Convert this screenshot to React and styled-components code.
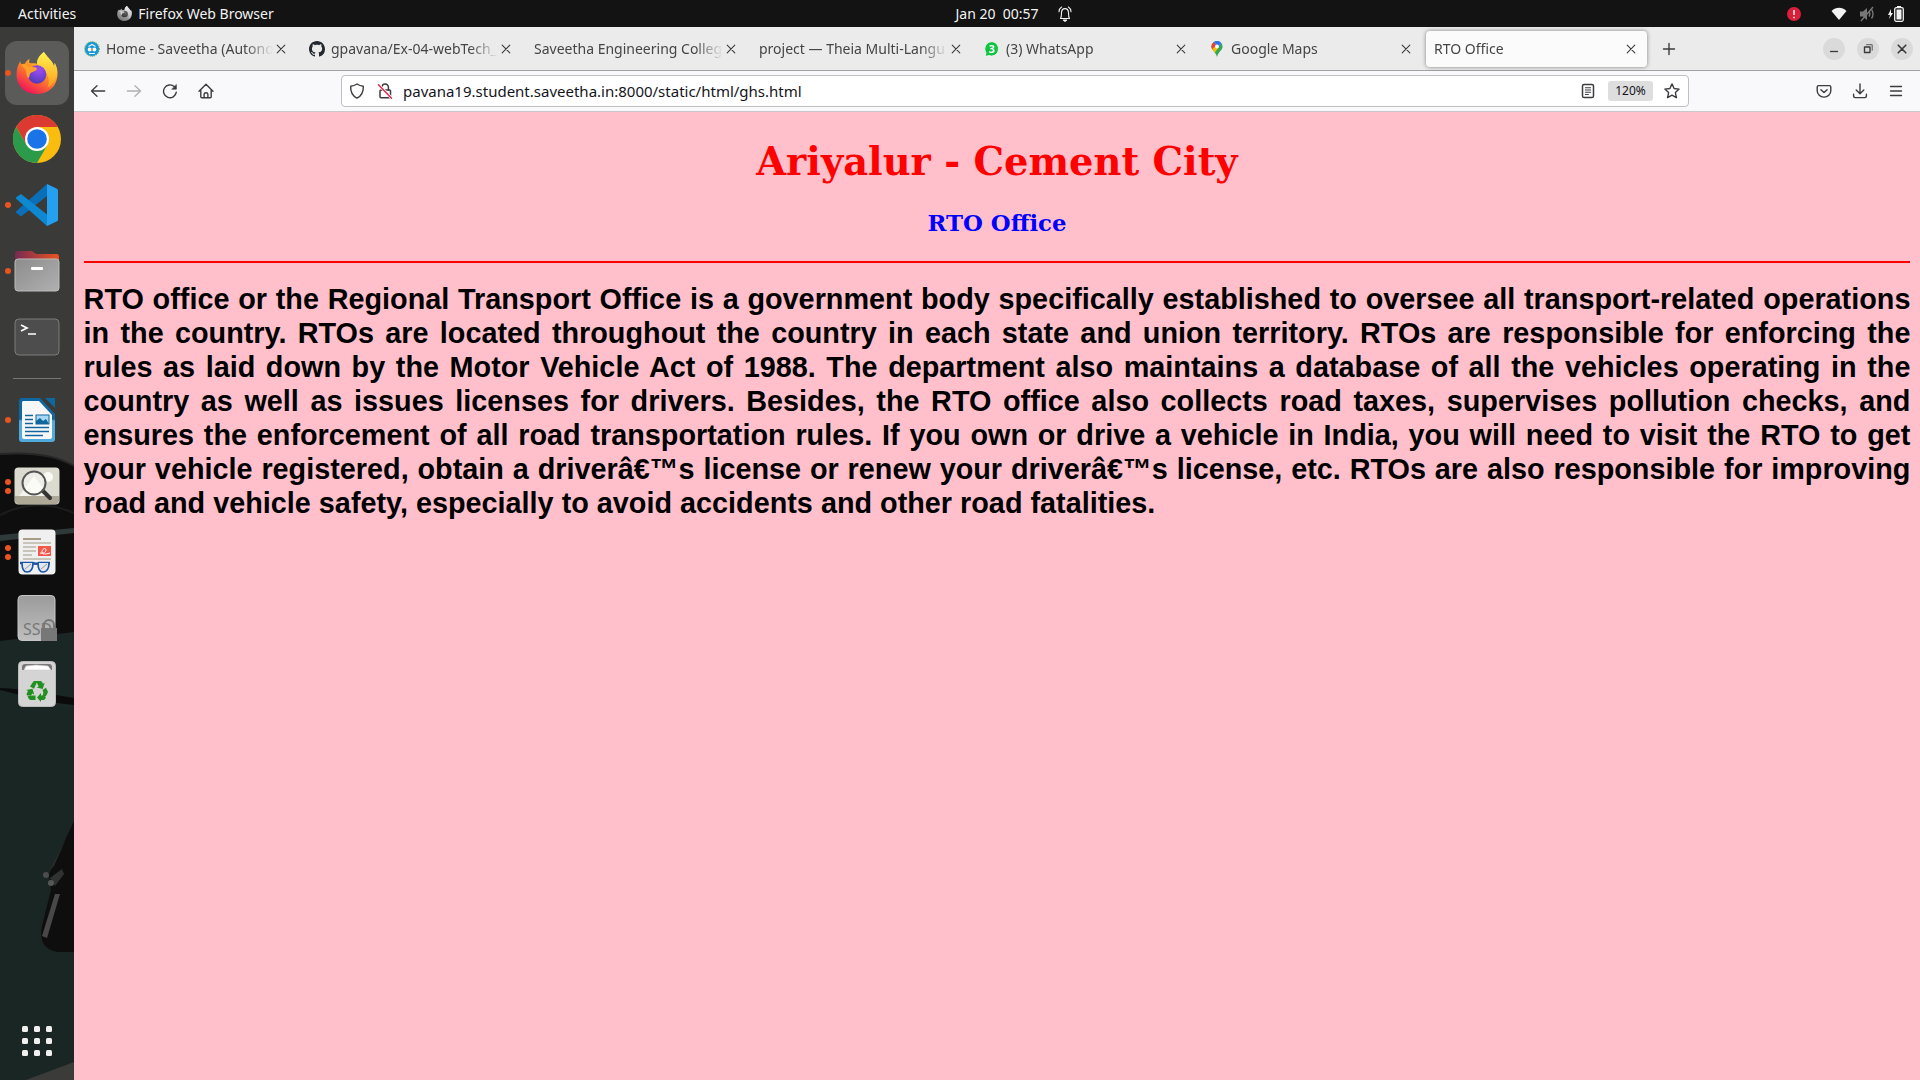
import React from "react";
import styled, { createGlobalStyle, css } from "styled-components";

const GlobalStyle = createGlobalStyle`
  *, *::before, *::after { box-sizing: border-box; }
  body { margin: 0; font-family: "Noto Sans", "Open Sans", sans-serif; font-size: 14px; }
  button { font: inherit; color: inherit; background: none; border: 0; padding: 0; margin: 0; cursor: pointer; }
  svg { display: block; flex: none; }
`;

const Desktop = styled.div`
  display: flex;
  flex-direction: column;
  min-height: 100vh;
  background: #131313;
`;

const TopBar = styled.header`
  display: grid;
  grid-template-columns: 74px 1fr auto 1fr;
  align-items: center;
  height: 27px;
  color: #f2f2f2;
  line-height: 20px;
`;

const BarLeft = styled.div`
  grid-column: 1 / 3;
  display: flex;
  align-items: center;
  gap: 41px;
  padding-left: 18px;
`;

const AppMenu = styled.button`
  display: flex;
  align-items: center;
  gap: 6px;
`;

const BarCenter = styled.button`
  display: grid;
  grid-template-columns: 34px auto 34px;
  align-items: center;
  white-space: pre;
  svg { justify-self: end; }
`;

const BarRight = styled.div`
  display: flex;
  align-items: center;
  justify-content: flex-end;
  gap: 12px;
  padding-right: 16px;
`;

const Alert = styled.span`
  display: flex;
  margin-right: 18px;
`;

const Main = styled.div`
  display: flex;
  flex: 1;
`;

const Dock = styled.nav`
  position: relative;
  display: flex;
  flex-direction: column;
  align-items: center;
  gap: 2px;
  width: 74px;
  flex: none;
  padding: 14px 0 7px;
  background: #1a2624;
  overflow: hidden;
`;

const Wallpaper = styled.svg`
  position: absolute;
  top: 0;
  left: 0;
`;

const DockItem = styled.button`
  position: relative;
  display: flex;
  align-items: center;
  justify-content: center;
  width: 64px;
  height: 64px;
  border-radius: 12px;
  ${(p) => p.$active && css`background: #5b5b59;`}
  ${(p) => p.$last && css`margin-top: auto;`}
`;

const Running = styled.span`
  position: absolute;
  left: 0;
  top: 0;
  height: 100%;
  display: flex;
  flex-direction: column;
  justify-content: center;
  gap: 3px;
  i {
    width: 6px;
    height: 6px;
    border-radius: 50%;
    background: #e95420;
  }
`;

const Divider = styled.hr`
  position: relative;
  width: 48px;
  height: 1px;
  margin: 7px 0;
  border: 0;
  background: #767675;
`;

const Browser = styled.div`
  flex: 1;
  min-width: 0;
  display: flex;
  flex-direction: column;
  background: #f9f9fb;
`;

const TabStrip = styled.div`
  display: flex;
  align-items: center;
  height: 44px;
  background: #ebebeb;
  border-bottom: 1px solid #a2a2a4;
  color: #454545;
`;

const Tab = styled.div`
  display: flex;
  align-items: center;
  flex: 0 1 221px;
  min-width: 0;
  height: 36px;
  margin: 0 2px;
  padding: 0 8px;
  border-radius: 4px;
  ${(p) => p.$active && css`
    background: #fbfbfb;
    box-shadow: 0 0 4px rgba(0, 0, 0, 0.45);
  `}
`;

const TabLabel = styled.button`
  display: flex;
  align-items: center;
  gap: 6px;
  flex: 1;
  min-width: 0;
  height: 100%;
  overflow: hidden;
  white-space: nowrap;
  mask-image: linear-gradient(to left, transparent 0, #000 28px);
`;

const IconButton = styled.button`
  display: flex;
  align-items: center;
  justify-content: center;
  flex: none;
  width: ${(p) => p.$w || 36}px;
  height: ${(p) => p.$h || 32}px;
  color: ${(p) => (p.$faded ? "#b0b0b3" : "#3c3c40")};
`;

const WindowButtons = styled.div`
  display: flex;
  gap: 12px;
  margin-left: auto;
  padding-right: 7px;
`;

const WindowButton = styled.button`
  display: flex;
  align-items: center;
  justify-content: center;
  width: 22px;
  height: 22px;
  border-radius: 50%;
  background: #dadada;
  color: #3a3a3a;
`;

const Toolbar = styled.div`
  display: flex;
  align-items: center;
  height: 41px;
  padding: 0 6px;
  border-bottom: 1px solid #c8c8ca;
`;

const NavGroup = styled.div`
  display: flex;
`;

const AddressBar = styled.form`
  display: flex;
  align-items: center;
  flex: 1;
  min-width: 0;
  height: 32px;
  margin: 0 117px;
  padding: 0 1px;
  background: #fff;
  border: 1px solid #c0c0c3;
  border-radius: 4px;
`;

const AddressInput = styled.input`
  flex: 1;
  min-width: 0;
  padding: 0 0 0 4px;
  border: 0;
  outline: 0;
  background: transparent;
  color: #15141a;
  font-family: inherit;
  font-size: 15px;
`;

const Zoom = styled.button`
  width: 45px;
  height: 20px;
  margin: 0 4px;
  border-radius: 3px;
  background: #dedede;
  color: #15141a;
  font-size: 12px;
  line-height: 20px;
`;

/* The page is viewed at the zoom level shown in the address bar. */
const Page = styled.main`
  zoom: 120%;
  flex: 1;
  padding: 23px 8px;
  background: #ffc0cb;
`;

const PageTitle = styled.h1`
  margin: 0 0 22px;
  color: #f00;
  font: bold 32px/37px "DejaVu Serif", serif;
  text-align: center;
`;

const PageSubtitle = styled.h3`
  margin: 0 0 20px;
  color: #00f;
  font: bold 19px/22px "DejaVu Serif", serif;
  text-align: center;
`;

const Rule = styled.hr`
  margin: 0 0 17px;
  border: 0;
  border-top: 2px solid #f00;
`;

const Body = styled.p`
  margin: 0;
  color: #000;
  font: bold 24px/1.18 "Liberation Sans", Arial, sans-serif;
  text-align: justify;
`;

/* ---------- line icons ---------- */

const Line = ({ size = 16, w = 1.3, children }) => (
  <svg width={size} height={size} viewBox="0 0 16 16" fill="none" stroke="currentColor" strokeWidth={w} strokeLinecap="round" strokeLinejoin="round">
    {children}
  </svg>
);

const Cross = ({ w = 1.1 }) => <Line w={w}><path d="M4.2 4.2l7.6 7.6M11.8 4.2l-7.6 7.6" /></Line>;
const Back = () => <Line><path d="M14.7 8H1.5M7 2.7L1.5 8 7 13.3" /></Line>;
const Forward = () => <Line><path d="M1.3 8h13.2M9 2.7L14.5 8 9 13.3" /></Line>;
const Reload = () => (
  <Line w={1.4}><path d="M14.3 9.2A6.4 6.4 0 1 1 12.3 3.6" /><path d="M14.4 1.8v4.4H10z" fill="currentColor" strokeWidth=".6" /></Line>
);
const Home = () => (
  <Line w={1.4}><path d="M1 8.3L8 1.2l7 7.1M2.8 7v6.8c0 .6.4 1 1 1h8.4c.6 0 1-.4 1-1V7" /><path d="M6.1 14.6v-3.4c0-.9.8-1.5 1.9-1.5s1.9.6 1.9 1.5v3.4" /></Line>
);
const Shield = () => <Line w={1.4}><path d="M8 1C6 2.3 3.8 3 1.7 3.2c-.3 5.1 1.4 9.4 6.3 11.9 4.9-2.5 6.6-6.8 6.3-11.9C12.200 3 10 2.300 8 1z" /></Line>;
const LockOff = () => (
  <Line w={1.5}><rect x="3" y="7" width="10.500" height="7.700" rx="1" /><path d="M5 7V4.300a3.200 3.200 0 0 1 6.400 0V7" /><path d="M1.500 1.500l13.500 14" stroke="#fff" strokeWidth="3" /><path d="M1.500 1.700l13 13.600" stroke="#e22850" strokeWidth="1.500" /></Line>
);
const Reader = () => <Line w={1.5}><rect x="2.500" y="1.500" width="11" height="13" rx="1.600" /><path d="M5.400 4.700h5.200M5.400 7h5.200M5.400 9.300h5.200M5.400 11.500h3" strokeWidth="1.100" /></Line>;
const Star = () => <Line w={1.4}><path d="M8 .9l2.100 4.600 5 .6-3.700 3.500 1 5L8 12.100l-4.400 2.500 1-5L.9 6.100l5-.6z" /></Line>;
const Pocket = () => <Line w={1.4}><path d="M2.600 2.600h10.800c.8 0 1.400.6 1.400 1.300v3.800a6.800 6.400 0 0 1-13.600 0V3.900c0-.7.6-1.300 1.400-1.300z" /><path d="M4.900 6.700L8 9.600l3.100-2.900" /></Line>;
const Download = () => <Line w={1.4}><path d="M8 1v9.500M4.200 7L8 10.700 11.800 7M1.600 11.300v1.800c0 .9.600 1.500 1.500 1.500h9.800c.9 0 1.500-.6 1.500-1.500v-1.800" /></Line>;
const Menu = () => <Line w={1.3}><path d="M2.500 3.500h11M2.500 8h11M2.500 12.500h11" /></Line>;
const Plus = () => <Line w={1.4}><path d="M8 2.500v11M2.500 8h11" /></Line>;

const Bell = () => (
  <Line w={1.1}><path d="M3.500 12.500c1-1.200 1-3 1-5.500 0-2.600 1.300-4.400 3.500-4.400s3.500 1.800 3.500 4.400c0 2.500 0 4.300 1 5.500zM2 5.800C2 3.500 3 2 4.600 1M14 5.800C14 3.500 13 2 11.400 1" /><path d="M6.400 14h3.200L8 15.400z" fill="currentColor" /></Line>
);

/* ---------- colour icons ---------- */

const FirefoxLogo = ({ size = 42, gray }) => {
  const id = gray ? "fg" : "fc";
  const stops = gray ? ["#ddd", "#aaa", "#777"] : ["#fff04a", "#ff9120", "#f0125a"];
  return (
    <svg width={size} height={size} viewBox="0 0 42 43">
      <defs>
        <linearGradient id={id} x1=".85" y1=".1" x2=".3" y2="1">
          <stop offset=".05" stopColor={stops[0]} /><stop offset=".45" stopColor={stops[1]} /><stop offset="1" stopColor={stops[2]} />
        </linearGradient>
        <radialGradient id={id + "p"} cx=".6" cy=".25" r=".8">
          <stop offset="0" stopColor={gray ? "#666" : "#a24bf5"} /><stop offset="1" stopColor={gray ? "#333" : "#4a3bb5"} />
        </radialGradient>
        <linearGradient id={id + "f"} x1="0" y1="0" x2="0" y2="1">
          <stop offset="0" stopColor={gray ? "#eee" : "#fff44f"} /><stop offset="1" stopColor={gray ? "#bbb" : "#ff9d20"} />
        </linearGradient>
      </defs>
      <path d="M4 9c-4 7-5 14-3 21 3 8 10 13 20 13s18-6 20-14c2-7 1-13-2-18 0 2 0 3-.5 4C37 9 31 5 28 0c-4 3-7 7-7 12-4-1-5 0-8-1 0-1 0-3 .5-4-2 1-4 3-5 5-1 0-2 0-3 .5C4 12 4 10 4 9z" fill={`url(#${id})`} />
      <path d="M21 12c0-5 3-9 7-12 3 5 9 9 10.500 15 .5-1 .5-2 .5-4 3 6 3 12 0 18-1 3-4 6-7 7 3-7 0-14-5-19z" fill={`url(#${id}f)`} />
      <circle cx="21" cy="23" r="9.500" fill={`url(#${id}p)`} />
      <path d="M5 13c4-1 6 0 8 2 3 0 7 0 8 2 0 3-5 3-7 5-1 2 0 3-2 5-3-4-1-7-3-9z" fill={gray ? "#ccc" : "#ffa12c"} />
    </svg>
  );
};

const Chrome = () => (
  <svg width="48" height="48" viewBox="0 0 48 48">
    <circle cx="24" cy="24" r="24" fill="#fbbc10" />
    <path d="M3.200 12A24 24 0 0 1 44.800 12H24L13.600 30z" fill="#dc3a30" />
    <path d="M3.200 12A24 24 0 0 0 24 48l10.400-18H13.600z" fill="#2b9a4a" />
    <circle cx="24" cy="24" r="12" fill="#fff" /><circle cx="24" cy="24" r="9.800" fill="#1b73e8" />
  </svg>
);

const VSCode = () => (
  <svg width="42" height="42" viewBox="0 0 42 42">
    <path d="M31 0v12L5 32.500l-4.500-3.500c-.7-.6-.7-1.400 0-2z" fill="#0a6fb8" />
    <path d="M31 42V30.500L5 10 .5 13c-.7.600-.7 1.400 0 2z" fill="#0f88d2" />
    <path d="M31 0l9.500 4.500c1 .5 1.500 1.200 1.500 2v29c0 .9-.5 1.600-1.500 2L31 42z" fill="#25a0f0" />
  </svg>
);

const Files = () => (
  <svg width="46" height="42" viewBox="0 0 46 42">
    <defs>
      <linearGradient id="fol"><stop offset="0" stopColor="#772953" /><stop offset="1" stopColor="#e95420" /></linearGradient>
      <linearGradient id="fr" x1="0" y1="0" x2="1" y2="1"><stop offset="0" stopColor="#8c8c8c" /><stop offset="1" stopColor="#b0b0b0" /></linearGradient>
    </defs>
    <path d="M1 4c0-2 1-3 3-3h14l4 3h20c2 0 3 1 3 3v12H1z" fill="url(#fol)" />
    <rect x="1" y="9" width="44" height="32" rx="3" fill="url(#fr)" stroke="#bcbcbc" />
    <rect x="17" y="17" width="12" height="3" rx="1" fill="#fff" />
  </svg>
);

const Terminal = () => (
  <svg width="46" height="38" viewBox="0 0 46 38">
    <rect x="1" y="1" width="44" height="36" rx="4" fill="#4d4d4d" stroke="#7c7c7a" />
    <path d="M7 7l6 3-6 3M14 16h8" fill="none" stroke="#fff" strokeWidth="1.700" />
  </svg>
);

const Writer = () => (
  <svg width="38" height="46" viewBox="0 0 38 46">
    <defs><linearGradient id="wr" x1="0" y1="0" x2="0" y2="1"><stop offset=".48" stopColor="#10679f" /><stop offset=".52" stopColor="#52a9dc" /></linearGradient></defs>
    <path d="M5 1h17l15 16v25c0 2-1 3-3 3H4c-2 0-3-1-3-3V5c0-3 1-4 4-4z" fill="url(#wr)" />
    <path d="M5 4h16l13 14v22c0 1-1 2-2 2H6c-1 0-2-1-2-2V5z" fill="#f7f7f7" />
    <path d="M27 1h10v10z" fill="#10679f" />
    <path d="M7 18.500h8M7 22.500h8M7 26.500h8M7 30.500h24M7 34.500h24M7 38.500h18" stroke="#10679f" strokeWidth="1.700" />
    <rect x="18" y="18" width="13" height="9" fill="#a7d8f5" stroke="#10679f" /><path d="M18 27v-3l4-3 3 3 3-2 3 5z" fill="#10679f" />
  </svg>
);

const ImageViewer = () => (
  <svg width="46" height="38" viewBox="0 0 46 38">
    <rect x=".5" y=".5" width="45" height="37" rx="4" fill="#dcdbd0" />
    <path d="M1 29h44v4c0 3-1 4-4 4H5c-3 0-4-1-4-4z" fill="#aea897" />
    <path d="M5 29L20 9l15 20z" fill="#f4f4ee" /><circle cx="34" cy="10" r="5" fill="#fafaf5" />
    <path d="M29 24l7 7" stroke="#333" strokeWidth="4" strokeLinecap="round" />
    <circle cx="20" cy="16" r="11.500" fill="#fff" fillOpacity=".5" stroke="#555" strokeWidth="2" />
  </svg>
);

const DocViewer = () => (
  <svg width="38" height="46" viewBox="0 0 38 46">
    <rect x=".5" y=".5" width="37" height="45" rx="4" fill="#f0f0f0" />
    <path d="M5 10h18" stroke="#a89d86" strokeWidth="2" />
    <path d="M5 14h28M5 18h13M5 22h13M5 26h9M5 30h28" stroke="#bcb5a6" strokeWidth="1.700" />
    <rect x="20" y="17" width="13" height="10" fill="#f25747" /><path d="M22 24c3 1 6-1 6-3s-3-2-4 1 2 4 8 2" fill="none" stroke="#fff" />
    <path d="M2 34h13c1 1 5 1 6 0h11" fill="none" stroke="#1a55a5" strokeWidth="2.500" />
    <path d="M4 34c0 5 1 9 5 9 5 0 6-4 6-9M20 34c0 5 1 9 5 9 4 0 6-4 6-9" fill="#e3e8ee" stroke="#1a55a5" strokeWidth="1.700" />
    <path d="M7 40l6-5M23 40l6-5" stroke="#999" />
  </svg>
);

const Ssd = () => (
  <svg width="40" height="46" viewBox="0 0 40 46">
    <defs><linearGradient id="sd" x1="0" y1="0" x2="0" y2="1"><stop offset="0" stopColor="#9b9b9b" /><stop offset="1" stopColor="#bfbfbf" /></linearGradient></defs>
    <rect x="1" y=".5" width="37" height="45" rx="4" fill="url(#sd)" stroke="#c5c5c5" />
    <text x="6" y="40" fontFamily="Noto Sans, sans-serif" fontSize="16" fill="#777">SSD</text>
    <path d="M27 34v-4a5 5 0 0 1 10 0v4" fill="none" stroke="#777" strokeWidth="2" /><path d="M24 33h16v13H24z" fill="#777" />
  </svg>
);

const Trash = () => (
  <svg width="38" height="46" viewBox="0 0 38 46">
    <rect x=".5" y=".5" width="37" height="45" rx="4" fill="#d4d4d4" stroke="#bbb" />
    <path d="M4 9V6c0-2 1-3 3-3h24c2 0 3 1 3 3v3z" fill="#777" />
    <path d="M6 9l2-4 10-1 12 1 3 4z" fill="#fff" stroke="#ccc" strokeWidth=".6" />
    <g fill="#20901f">
      <path d="M12 25.500l3-4.500c.5-.7 1-1 2-1h2.500L16 27.800z" />
      <path d="M18 20h4c1 0 1.500.3 2 1l1 1.700 1.700-1-2 6.300-6-1.500 2-1z" />
      <path d="M24.500 29l3.500-2.200 1.500 3c.5 1 .5 1.500 0 2.500L28 35l-3.700-.1c1.200-2 1.500-3.900.2-5.900z" />
      <path d="M28 36l-1 2c-.5.700-1 1-2 1h-2v2l-4-4.500 4-4.500v2.500h3z" />
      <path d="M17.500 34.500V39H13c-1 0-1.500-.3-2-1l-1.500-2.500c1.500-1 3-1 4.500-1z" />
      <path d="M9 34.500c-.5-1-.4-1.700 0-2.500l1-2-1.700-1 6.200-1.300 1.700 5.800-2-1-1.200 2z" />
    </g>
  </svg>
);

const AppGrid = () => (
  <svg width="30" height="30" viewBox="0 0 30 30" fill="#f0f0ee">
    {[0, 12, 24].map((y) => [0, 12, 24].map((x) => <rect key={`${x}-${y}`} x={x} y={y} width="6" height="6" rx="1.500" />))}
  </svg>
);

const DockWallpaper = () => (
  <Wallpaper width="74" height="1053" viewBox="0 0 74 1053" aria-hidden="true">
    <path d="M0 0h74v440H0z" fill="#3a3a38" />
    <path d="M0 427c30-2 56 1 74 12v180L0 630z" fill="#0e0e0f" />
    <path d="M0 427c30-2 56 1 74 12" fill="none" stroke="#262626" strokeWidth="2" />
    <path d="M0 488c30-15 56-10 74-2" fill="none" stroke="#1c1c1d" strokeWidth="2" />
    <path d="M0 508l74-7v5L0 514z" fill="#2e3a39" />
    <path d="M0 614l74-9v80L0 662z" fill="#1a2725" />
    <path d="M0 661c25 1 50 6 74 10v7c-24-2-50-9-74-15z" fill="#0b0b0c" />
    <path d="M74 794L49 847l2 16-9 36c-3 16 3 24 16 26h16z" fill="#0e0e0f" />
    <path d="M55 867l5 0-13 44-5-2z" fill="#484848" />
    <path d="M74 794L54 839l-5 5 18-34z" fill="#292b2b" />
    <path d="M50 851l12-9 2 5-9 12z" fill="#303232" />
    <circle cx="46" cy="848" r="3" fill="#4c4e4d" /><circle cx="51" cy="856" r="3" fill="#565857" />
    <path d="M26 1053l48-18v18z" fill="#3b3b39" />
  </Wallpaper>
);

const SaveethaIcon = () => (
  <svg width="16" height="16" viewBox="0 0 16 16">
    <circle cx="8" cy="8" r="7.200" fill="#1997d5" stroke="#52a878" strokeWidth="1.200" strokeDasharray="1 1" />
    <path d="M4.500 5.500L8 3.500l3.500 2M5 12.500h6" fill="none" stroke="#e6f5fc" strokeWidth="1.200" />
    <circle cx="5.700" cy="8.500" r="2" fill="#fff" /><circle cx="10.300" cy="8.500" r="2" fill="#fff" /><circle cx="8" cy="8.500" r=".9" fill="#f08a30" />
  </svg>
);
const GithubIcon = () => (
  <svg width="16" height="16" viewBox="0 0 16 16" fill="#24292f">
    <path d="M8 0C3.580 0 0 3.580 0 8c0 3.540 2.290 6.530 5.470 7.590.4.070.55-.17.55-.38 0-.19-.01-.82-.01-1.490-2.010.37-2.530-.49-2.690-.94-.09-.23-.48-.94-.82-1.130-.28-.15-.68-.52-.01-.53.63-.01 1.080.58 1.230.82.72 1.210 1.870.87 2.330.66.07-.52.28-.87.51-1.070-1.780-.2-3.640-.89-3.640-3.950 0-.87.31-1.590.82-2.150-.08-.2-.36-1.020.08-2.120 0 0 .67-.21 2.200.82.64-.18 1.320-.27 2-.27s1.360.09 2 .27c1.530-1.040 2.200-.82 2.200-.82.44 1.100.16 1.920.08 2.120.51.56.82 1.270.82 2.150 0 3.070-1.870 3.750-3.650 3.950.29.25.54.73.54 1.480 0 1.070-.01 1.930-.01 2.200 0 .21.15.46.55.38A8.010 8.010 0 0 0 16 8c0-4.420-3.580-8-8-8z" />
  </svg>
);
const WhatsappIcon = () => (
  <svg width="16" height="16" viewBox="0 0 16 16">
    <path d="M8 .5A7.300 7.300 0 1 1 4.700 14.600L1 15.500l1-3.600A7.300 7.300 0 0 1 8 .5z" fill="#10c441" stroke="#fff" strokeWidth=".8" />
    <text x="8" y="12" textAnchor="middle" fontFamily="Noto Sans, sans-serif" fontWeight="bold" fontSize="11" fill="#fff">3</text>
  </svg>
);
const MapsIcon = () => (
  <svg width="16" height="16" viewBox="0 0 16 16">
    <clipPath id="pin"><path d="M8 0a5.600 5.600 0 0 0-5.600 5.600C2.400 9.500 6.500 10.500 8 16c1.500-5.500 5.600-6.500 5.600-10.400A5.600 5.600 0 0 0 8 0z" /></clipPath>
    <g clipPath="url(#pin)">
      <path d="M0 0h16v16H0z" fill="#34a853" /><path d="M3 0h12L8 7z" fill="#4285f4" />
      <path d="M2 2l3-1 3 5-4 4H0z" fill="#ea4335" /><path d="M2 9l6-5 1 3-4 6z" fill="#fbbc04" /><path d="M5 0h8l-4 5z" fill="#2b75e8" />
    </g>
    <circle cx="8" cy="5.600" r="2" fill="#fff" />
  </svg>
);

const tabs = [
  { title: "Home - Saveetha (Autono", icon: <SaveethaIcon /> },
  { title: "gpavana/Ex-04-webTech_", icon: <GithubIcon /> },
  { title: "Saveetha Engineering Colleg" },
  { title: "project — Theia Multi-Langu" },
  { title: "(3) WhatsApp", icon: <WhatsappIcon /> },
  { title: "Google Maps", icon: <MapsIcon /> },
  { title: "RTO Office", active: true },
];

const dockApps = [
  { name: "Firefox", icon: <FirefoxLogo />, windows: 1, active: true },
  { name: "Chrome", icon: <Chrome />, windows: 0 },
  { name: "Visual Studio Code", icon: <VSCode />, windows: 1 },
  { name: "Files", icon: <Files />, windows: 1 },
  { name: "Terminal", icon: <Terminal />, windows: 0 },
  { divider: true, name: "divider" },
  { name: "Writer", icon: <Writer />, windows: 1 },
  { name: "Image Viewer", icon: <ImageViewer />, windows: 2 },
  { name: "Document Viewer", icon: <DocViewer />, windows: 2 },
  { name: "SSD", icon: <Ssd />, windows: 0 },
  { name: "Trash", icon: <Trash />, windows: 0 },
];

export default function App() {
  return (
    <Desktop>
      <GlobalStyle />
      <TopBar>
        <BarLeft>
          <button>Activities</button>
          <AppMenu><FirefoxLogo size={15} gray />Firefox Web Browser</AppMenu>
        </BarLeft>
        <BarCenter><span /><span>{"Jan 20  00:57"}</span><Bell /></BarCenter>
        <BarRight>
          <Alert>
            <svg width="14" height="14" viewBox="0 0 14 14"><circle cx="7" cy="7" r="7" fill="#da1f3b" /><path d="M7 3v5M7 9.700v1.500" stroke="#fff" strokeWidth="1.400" /></svg>
          </Alert>
          <svg width="16" height="14" viewBox="0 0 16 14"><path d="M.5 4C5-.2 11-.2 15.500 4L8 13z" fill="#f2f2f2" /></svg>
          <svg width="16" height="16" viewBox="0 0 16 16" fill="none" stroke="#777" strokeWidth="1.400"><path d="M1 5.500h3L8 2v12l-4-3.500H1z" fill="#777" stroke="none" /><path d="M10 5.500c1 1.500 1 3.500 0 5M12.500 3.500c2 2.500 2 6.500 0 9" /><path d="M14 1L2 15" /></svg>
          <svg width="17" height="16" viewBox="0 0 17 16"><path d="M4 3L1 9h2l-1 4 4-6H4z" fill="#f2f2f2" /><path d="M10 0h4v2h-4z" fill="#f2f2f2" /><rect x="7.700" y="1.700" width="8.600" height="13.600" rx="1.500" fill="none" stroke="#f2f2f2" strokeWidth="1.300" /><rect x="9.500" y="3.500" width="5" height="10" fill="#f2f2f2" /></svg>
        </BarRight>
      </TopBar>
      <Main>
        <Dock aria-label="Dock">
          <DockWallpaper />
          {dockApps.map((a) =>
            a.divider ? <Divider key={a.name} /> : (
              <DockItem key={a.name} aria-label={a.name} $active={a.active}>
                <Running>{Array.from({ length: a.windows }, (_, i) => <i key={i} />)}</Running>
                {a.icon}
              </DockItem>
            )
          )}
          <DockItem aria-label="Show Applications" $last><AppGrid /></DockItem>
        </Dock>
        <Browser>
          <TabStrip>
            {tabs.map((t) => (
              <Tab key={t.title} $active={t.active}>
                <TabLabel>{t.icon}{t.title}</TabLabel>
                <IconButton $w={16} $h={16} aria-label="Close tab"><Cross /></IconButton>
              </Tab>
            ))}
            <IconButton $w={40} aria-label="New tab"><Plus /></IconButton>
            <WindowButtons>
              <WindowButton aria-label="Minimize"><Line><path d="M4 10.500h8" strokeLinecap="butt" /></Line></WindowButton>
              <WindowButton aria-label="Restore"><Line w={1.4}><path d="M4.500 6h5.500v5.500H4.500z" /><path d="M6.500 3.700h5.700v5.600" strokeWidth=".8" /></Line></WindowButton>
              <WindowButton aria-label="Close"><Cross w={1.6} /></WindowButton>
            </WindowButtons>
          </TabStrip>
          <Toolbar>
            <NavGroup>
              <IconButton aria-label="Back"><Back /></IconButton>
              <IconButton aria-label="Forward" $faded><Forward /></IconButton>
              <IconButton aria-label="Reload"><Reload /></IconButton>
              <IconButton aria-label="Home"><Home /></IconButton>
            </NavGroup>
            <AddressBar onSubmit={(e) => e.preventDefault()}>
              <IconButton type="button" $w={28} aria-label="Tracking protection"><Shield /></IconButton>
              <IconButton type="button" $w={28} aria-label="Connection not secure"><LockOff /></IconButton>
              <AddressInput aria-label="Address" defaultValue="pavana19.student.saveetha.in:8000/static/html/ghs.html" />
              <IconButton type="button" $w={32} aria-label="Reader view"><Reader /></IconButton>
              <Zoom type="button">120%</Zoom>
              <IconButton type="button" $w={30} aria-label="Bookmark"><Star /></IconButton>
            </AddressBar>
            <NavGroup>
              <IconButton aria-label="Save to Pocket"><Pocket /></IconButton>
              <IconButton aria-label="Downloads"><Download /></IconButton>
              <IconButton aria-label="Menu"><Menu /></IconButton>
            </NavGroup>
          </Toolbar>
          <Page>
            <PageTitle>Ariyalur - Cement City</PageTitle>
            <PageSubtitle>RTO Office</PageSubtitle>
            <Rule />
            <Body>
              RTO office or the Regional Transport Office is a government body specifically established to oversee all
              transport-related operations in the country. RTOs are located throughout the country in each state and
              union territory. RTOs are responsible for enforcing the rules as laid down by the Motor Vehicle Act of
              1988. The department also maintains a database of all the vehicles operating in the country as well as
              issues licenses for drivers. Besides, the RTO office also collects road taxes, supervises pollution
              checks, and ensures the enforcement of all road transportation rules. If you own or drive a vehicle in
              India, you will need to visit the RTO to get your vehicle registered, obtain a driverâ€™s license or
              renew your driverâ€™s license, etc. RTOs are also responsible for improving road and vehicle safety,
              especially to avoid accidents and other road fatalities.
            </Body>
          </Page>
        </Browser>
      </Main>
    </Desktop>
  );
}
